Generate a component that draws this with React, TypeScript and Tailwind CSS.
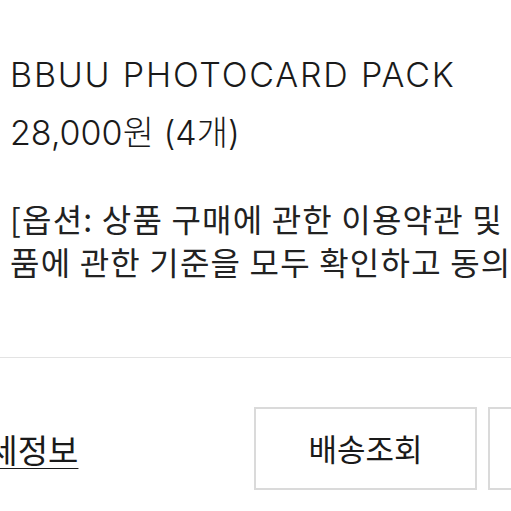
export default function App() {
  return (
    <div className="w-[511px] h-[511px] overflow-hidden bg-white text-[#1a1a1a]">
      <div className="pl-[10px] pt-[46px]">
        <div className="whitespace-nowrap text-[34px] leading-[58px] font-light tracking-[1.8px]" style={{ fontFamily: 'Inter, "Noto Sans CJK KR", sans-serif' }}>
          BBUU PHOTOCARD PACK
        </div>
        <div className="whitespace-nowrap text-[34px] leading-[58px] font-light" style={{ fontFamily: 'Inter, "Noto Sans CJK KR", sans-serif' }}>
          28,000원 (4개)
        </div>
        <div className="mt-[35px] text-[32px] leading-[43px] tracking-[1.2px] text-[#222]" style={{ fontFamily: '"Noto Sans CJK KR", sans-serif' }}>
          <div className="whitespace-nowrap">[옵션: 상품 구매에 관한 이용약관 및</div>
          <div className="whitespace-nowrap">품에 관한 기준을 모두 확인하고 동의합니다.]</div>
        </div>
      </div>
      <div className="mt-[74px] h-px w-full bg-[#e3e3e3]" />
      <div className="mt-[49px] flex items-center" style={{ fontFamily: '"Noto Sans CJK KR", sans-serif' }}>
        <div className="w-[254px] shrink-0 overflow-hidden">
          <span className="ml-[-43px] inline-block whitespace-nowrap text-[33px] leading-[40px] underline underline-offset-[5px] decoration-[2px] text-[#1a1a1a]">
            상세정보
          </span>
        </div>
        <div className="flex gap-[11px] shrink-0">
          <div className="w-[223px] h-[83px] border-2 border-[#dadada] flex items-center justify-center text-[31px] text-[#1a1a1a] whitespace-nowrap">
            배송조회
          </div>
          <div className="w-[223px] h-[83px] border-2 border-[#dadada] flex items-center justify-center text-[31px] text-[#1a1a1a] whitespace-nowrap">
            구매확정
          </div>
        </div>
      </div>
    </div>
  );
}
